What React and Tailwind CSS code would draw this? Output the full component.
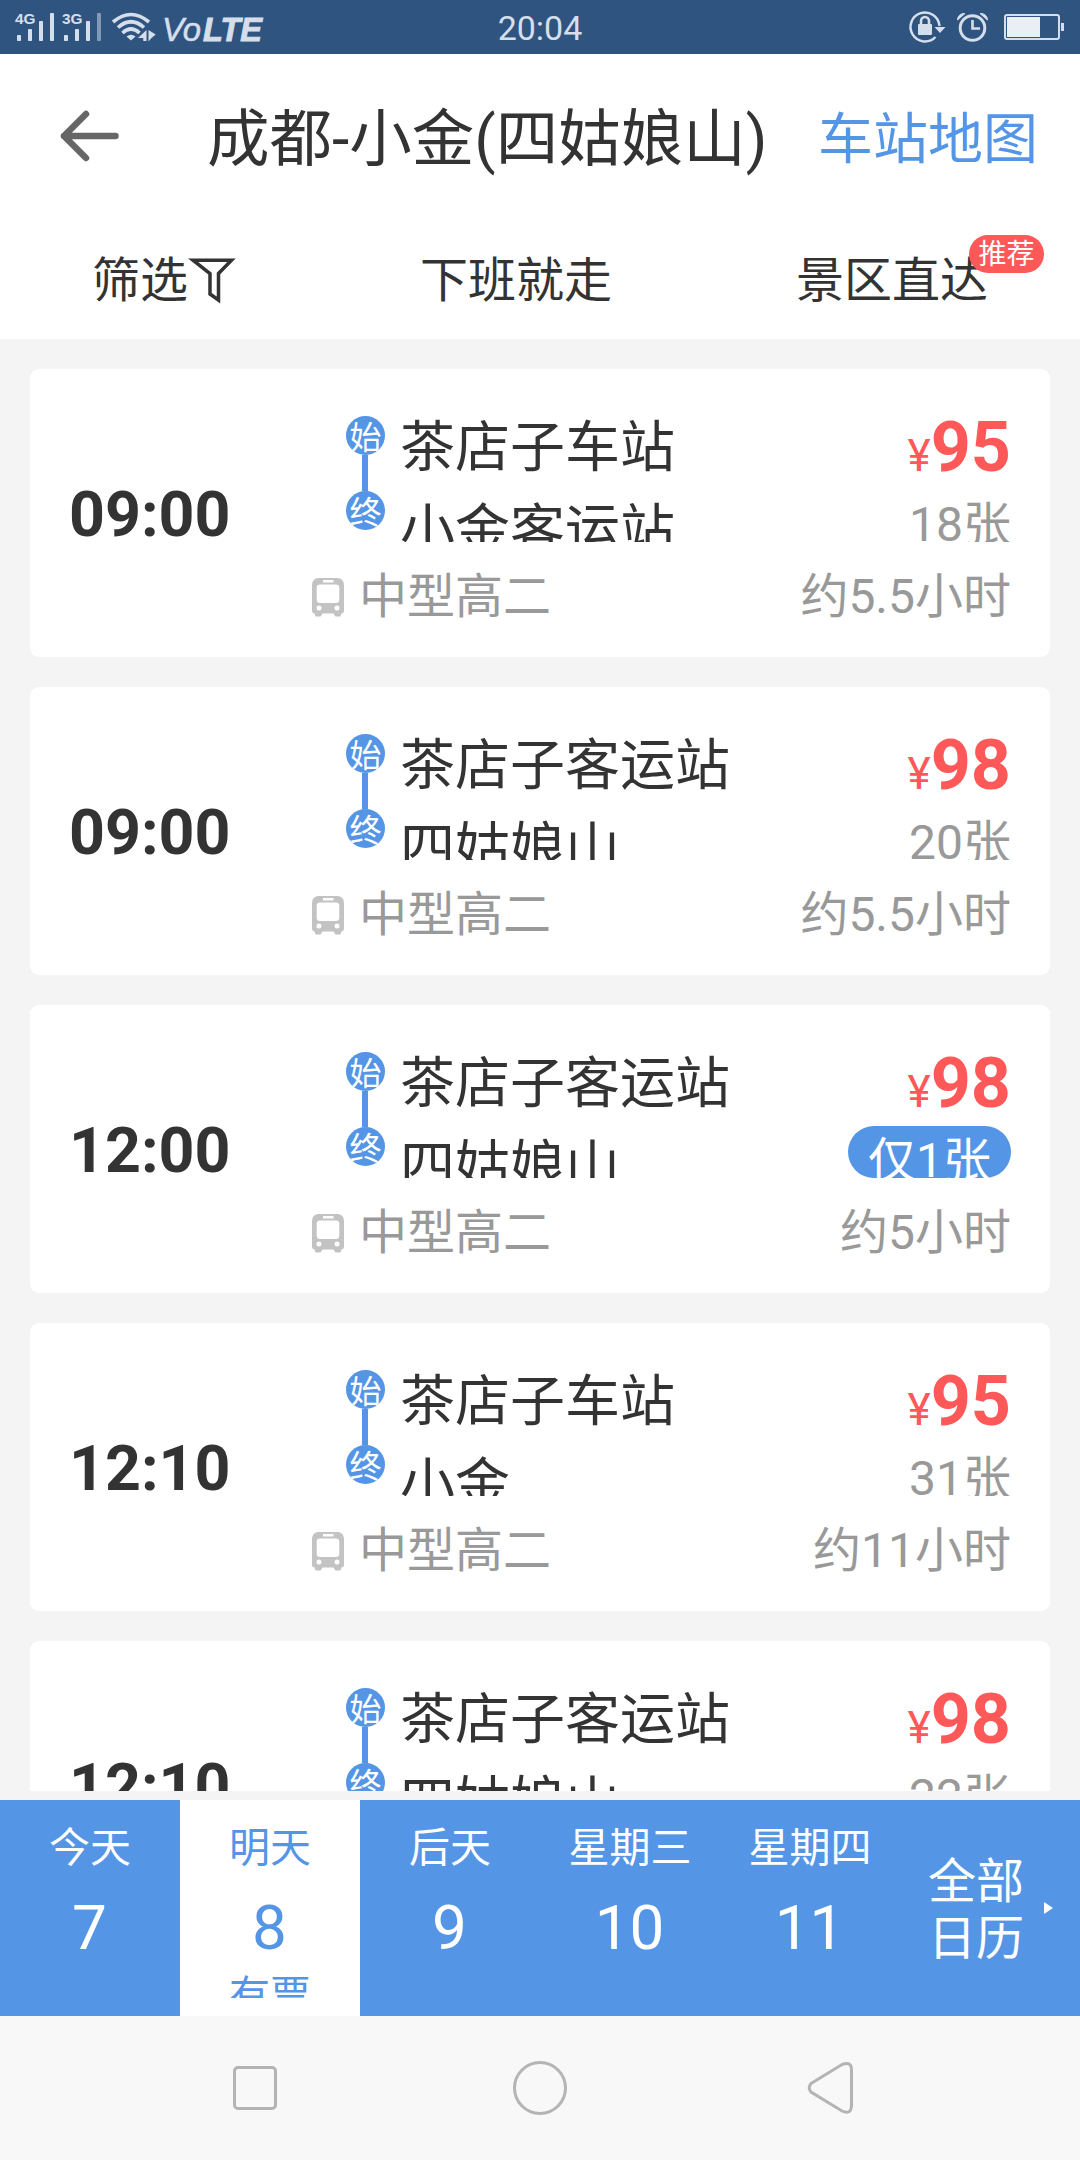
import clsx from 'clsx';

const trips = [
    { id: 1, time: '09:00', from: '茶店子车站', to: '小金客运站', price: 95, left: '18张', duration: '约5.5小时' },
    { id: 2, time: '09:00', from: '茶店子客运站', to: '四姑娘山', price: 98, left: '20张', duration: '约5.5小时' },
    { id: 3, time: '12:00', from: '茶店子客运站', to: '四姑娘山', price: 98, left: '仅1张', few: true, duration: '约5小时' },
    { id: 4, time: '12:10', from: '茶店子车站', to: '小金', price: 95, left: '31张', duration: '约11小时' },
    { id: 5, time: '12:10', from: '茶店子客运站', to: '四姑娘山', price: 98, left: '22张', duration: '约5小时' },
];

const days = [
    { label: '今天', day: 7 },
    { label: '明天', day: 8, active: true, note: '有票' },
    { label: '后天', day: 9 },
    { label: '星期三', day: 10 },
    { label: '星期四', day: 11 },
];

const StatusBar = () => (
    <div className="h-[54px] bg-[#2f5480] text-[#d5dfeb] flex items-center justify-between shrink-0">
        <svg width="270" height="54" viewBox="0 0 270 54" fill="#d5dfeb">
            <g fontFamily="Liberation Sans" fontSize="15.5" fontWeight="bold">
                <text x="15" y="24" textLength="20.500" lengthAdjust="spacingAndGlyphs">4G</text>
                <text x="62" y="24" textLength="20.500" lengthAdjust="spacingAndGlyphs">3G</text>
            </g>
            <rect x="17" y="35" width="4" height="6" rx="0.8" />
            <rect x="28" y="29" width="4" height="12" rx="0.8" />
            <rect x="39" y="21" width="4" height="20" rx="0.8" />
            <rect x="50" y="13" width="4" height="28" rx="0.8" />
            <rect x="64" y="35" width="4" height="6" rx="0.8" />
            <rect x="75" y="29" width="4" height="12" rx="0.8" />
            <rect x="86" y="21" width="4" height="20" rx="0.8" />
            <rect x="97" y="13" width="4" height="28" rx="0.8" opacity="0.5" />
            <g fill="none" stroke="#d5dfeb" strokeWidth="3.6">
                <path d="M113 22 Q131 7 149 22" />
                <path d="M118 27.500 Q131 16 144 27.500" />
                <path d="M122.500 33 Q131 25 139.500 33" />
            </g>
            <path d="M126.500 36.500 Q131 33 135.500 36.500 L131 40.500 Z" />
            <path d="M146.500 30 V41 H143.300 V38 H138 Z M148.500 30 L155.700 34.500 L151.500 38 L148.500 41.500 Z" />
            <text x="162" y="41" fontFamily="Liberation Sans" fontSize="33" fontStyle="italic" stroke="#d5dfeb" strokeWidth="0.5" textLength="39" lengthAdjust="spacingAndGlyphs">Vo</text>
            <text x="203" y="41" fontFamily="Liberation Sans" fontSize="33" fontStyle="italic" fontWeight="bold" stroke="#d5dfeb" strokeWidth="1" textLength="59" lengthAdjust="spacingAndGlyphs">LTE</text>
        </svg>
        <span className="text-[34px] leading-[54px] pt-px">20:04</span>
        <svg width="270" height="54" viewBox="810 0 270 54" fill="none" stroke="#d5dfeb">
            <path d="M935.500 37 A14.500 14.500 0 1 1 939.500 26" strokeWidth="2.500" />
            <path d="M934.500 27 H945.500 L940 33 Z" fill="#d5dfeb" stroke="none" />
            <rect x="918" y="24" width="14" height="11" rx="1" fill="#d5dfeb" stroke="none" />
            <path d="M921 25 V21 A4 4 0 0 1 929 21 V25" strokeWidth="2.600" />
            <circle cx="972.500" cy="28" r="12.300" strokeWidth="3" />
            <path d="M972.500 20 V28.500 H980" strokeWidth="2.600" />
            <path d="M957.500 20 A6.500 6.500 0 0 1 965 13.500 Z M980 13.500 A6.500 6.500 0 0 1 987.500 20 Z" fill="#d5dfeb" strokeWidth="1" />
            <rect x="1005" y="15" width="54" height="24" rx="2" strokeWidth="2" />
            <rect x="1007" y="17" width="33" height="20" fill="#eaeff5" stroke="none" />
            <rect x="1061" y="23" width="3" height="8" fill="#d5dfeb" stroke="none" />
        </svg>
    </div>
);

const Header = () => (
    <div className="bg-white shrink-0 h-[285px]">
        <div className="h-[165px] flex items-center pl-[60px] pr-[42px]">
            <svg width="60" height="54" viewBox="0 0 60 54" className="shrink-0" fill="none" stroke="#666" strokeWidth="6.500" strokeLinecap="round" strokeLinejoin="round">
                <path d="M55.500 26 H4 M26 4 L4 26 L26 48" />
            </svg>
            <h1 className="text-[62.500px] leading-[80px] ml-[87px] pt-[6px] whitespace-nowrap">成都-小金(四姑娘山)</h1>
            <a className="text-[55px] leading-[80px] pt-[4px] text-[#5495e6] ml-auto whitespace-nowrap">车站地图</a>
        </div>
        <div className="h-[120px] flex justify-between items-center pt-[3px] px-[92px] text-[48px] leading-[64px]">
            <div className="flex items-center">
                筛选
                <svg width="48" height="48" viewBox="0 0 48 48" fill="none" stroke="#333" strokeWidth="3.500">
                    <path d="M5 3.200 H43.500 L30.500 16.500 V43 L22 37 V16.500 Z" />
                </svg>
            </div>
            <div>下班就走</div>
            <div className="relative">
                景区直达
                <span className="absolute left-[173px] -top-[14px] w-[75px] h-[38px] rounded-full bg-[#ff5858] text-white text-[28px] leading-[40px] text-center whitespace-nowrap">推荐</span>
            </div>
        </div>
    </div>
);

const StopDot = ({ children }) => (
    <div className="w-[39px] h-[39px] rounded-full overflow-hidden bg-[#5495e6] text-white text-[32px] leading-[45px] flex justify-center">
        {children}
    </div>
);

const BusIcon = () => (
    <svg width="32" height="39" viewBox="0 0 32 39">
        <path fill="#c3c3c3" fillRule="evenodd" d="M6 0 H26 Q32 1 32 7 V33 Q32 35 29.500 35.500 L28.500 38.500 H23.500 L21.500 35.500 H10.500 L8.500 38.500 H3.500 L2.500 35.500 Q0 35 0 33 V7 Q0 1 6 0 Z M11 2 V4.500 H21.500 V2 Z M8 6.500 Q4.700 6.500 4.700 9.500 V21.500 Q4.700 25 8 25 H24 Q27.300 25 27.300 21.500 V9.500 Q27.300 6.500 24 6.500 Z M7 27.500 A2.500 2.500 0 1 0 7 32.500 A2.500 2.500 0 1 0 7 27.500 Z M25 27.500 A2.500 2.500 0 1 0 25 32.500 A2.500 2.500 0 1 0 25 27.500 Z" />
    </svg>
);

const TripCard = ({ trip }) => (
    <div className="h-[288px] shrink-0 rounded-[9px] bg-white flex">
        <div className="w-[282px] pl-[39px] pt-[106px] text-[62.700px] leading-[80px] font-bold">{trip.time}</div>
        <div className="grow pr-[39px]">
            <div className="flex h-[173px] overflow-hidden">
                <div className="w-[88px] pl-[34px] pt-[47px]">
                    <StopDot>始</StopDot>
                    <div className="w-[6px] h-[36px] ml-[16px] bg-[#5495e6]" />
                    <StopDot>终</StopDot>
                </div>
                <div className="grow pt-[37px] text-[55px] leading-[83px]">
                    <div>{trip.from}</div>
                    <div>{trip.to}</div>
                </div>
                <div className="flex flex-col items-end pt-[36px]">
                    <div className="h-[85px] leading-[85px] text-[#ff5858] whitespace-nowrap">
                        <span className="text-[44px]">¥</span>
                        <span className="text-[70px] font-bold">{trip.price}</span>
                    </div>
                    <div
                        className={clsx(
                            'h-[52px] overflow-hidden text-[48px] leading-[70px] whitespace-nowrap',
                            trip.few ? 'px-[20px] rounded-full bg-[#5495e6] text-white' : 'text-[#999]'
                        )}
                    >
                        {trip.left}
                    </div>
                </div>
            </div>
            <div className="flex items-center h-[110px] text-[48px] leading-[110px] text-[#999]">
                <BusIcon />
                <span className="ml-[15px]">中型高二</span>
                <span className="ml-auto">{trip.duration}</span>
            </div>
        </div>
    </div>
);

const DateBar = () => (
    <div className="h-[216px] shrink-0 bg-[#5495e6] text-white grid grid-cols-6">
        {days.map((d) => (
            <div key={d.day} className={clsx('pt-[17px] text-center', d.active && 'bg-white text-[#5495e6]')}>
                <div className="h-[64px] text-[41px] leading-[62px]">{d.label}</div>
                <div className="h-[90px] pr-px text-[62px] leading-[94px]">{d.day}</div>
                <div className="h-[27px] overflow-hidden text-[41px] leading-[51px]">{d.note}</div>
            </div>
        ))}
        <div className="flex items-center pl-[28px]">
            <div className="w-[100px] pt-[3px] text-[48px] leading-[57px]">
                全部
                <br />
                日历
            </div>
            <svg width="9" height="12" viewBox="0 0 9 12" fill="#fff" className="ml-[16px]">
                <path d="M0 0 L9 6 L0 12 Z" />
            </svg>
        </div>
    </div>
);

const NavBar = () => (
    <div className="h-[144px] shrink-0 bg-[#f8f8f8] flex justify-center items-center">
        <svg width="640" height="60" viewBox="220 2058 640 60" fill="none" stroke="#b4b4b4" strokeWidth="3">
            <rect x="234.500" y="2067.500" width="41" height="41" rx="3.500" />
            <circle cx="540" cy="2088" r="25.500" />
            <path d="M811 2083.500 L842 2064.500 Q851 2061 851.500 2069 V2106 Q851 2115 842 2111 L811 2092 Q807.500 2088 811 2083.500 Z" />
        </svg>
    </div>
);

const App = () => {
    return (
        <div className="w-[1080px] h-[2160px] overflow-hidden flex flex-col bg-[#f4f4f4] text-[#333] font-['Roboto','Noto_Sans_CJK_SC',sans-serif]">
            <StatusBar />
            <Header />
            <div className="h-[1452px] shrink-0 overflow-hidden flex flex-col gap-[30px] px-[30px] pt-[30px]">
                {trips.map((trip) => (
                    <TripCard key={trip.id} trip={trip} />
                ))}
            </div>
            <div className="h-[9px] shrink-0" />
            <DateBar />
            <NavBar />
        </div>
    );
};

export default App;
